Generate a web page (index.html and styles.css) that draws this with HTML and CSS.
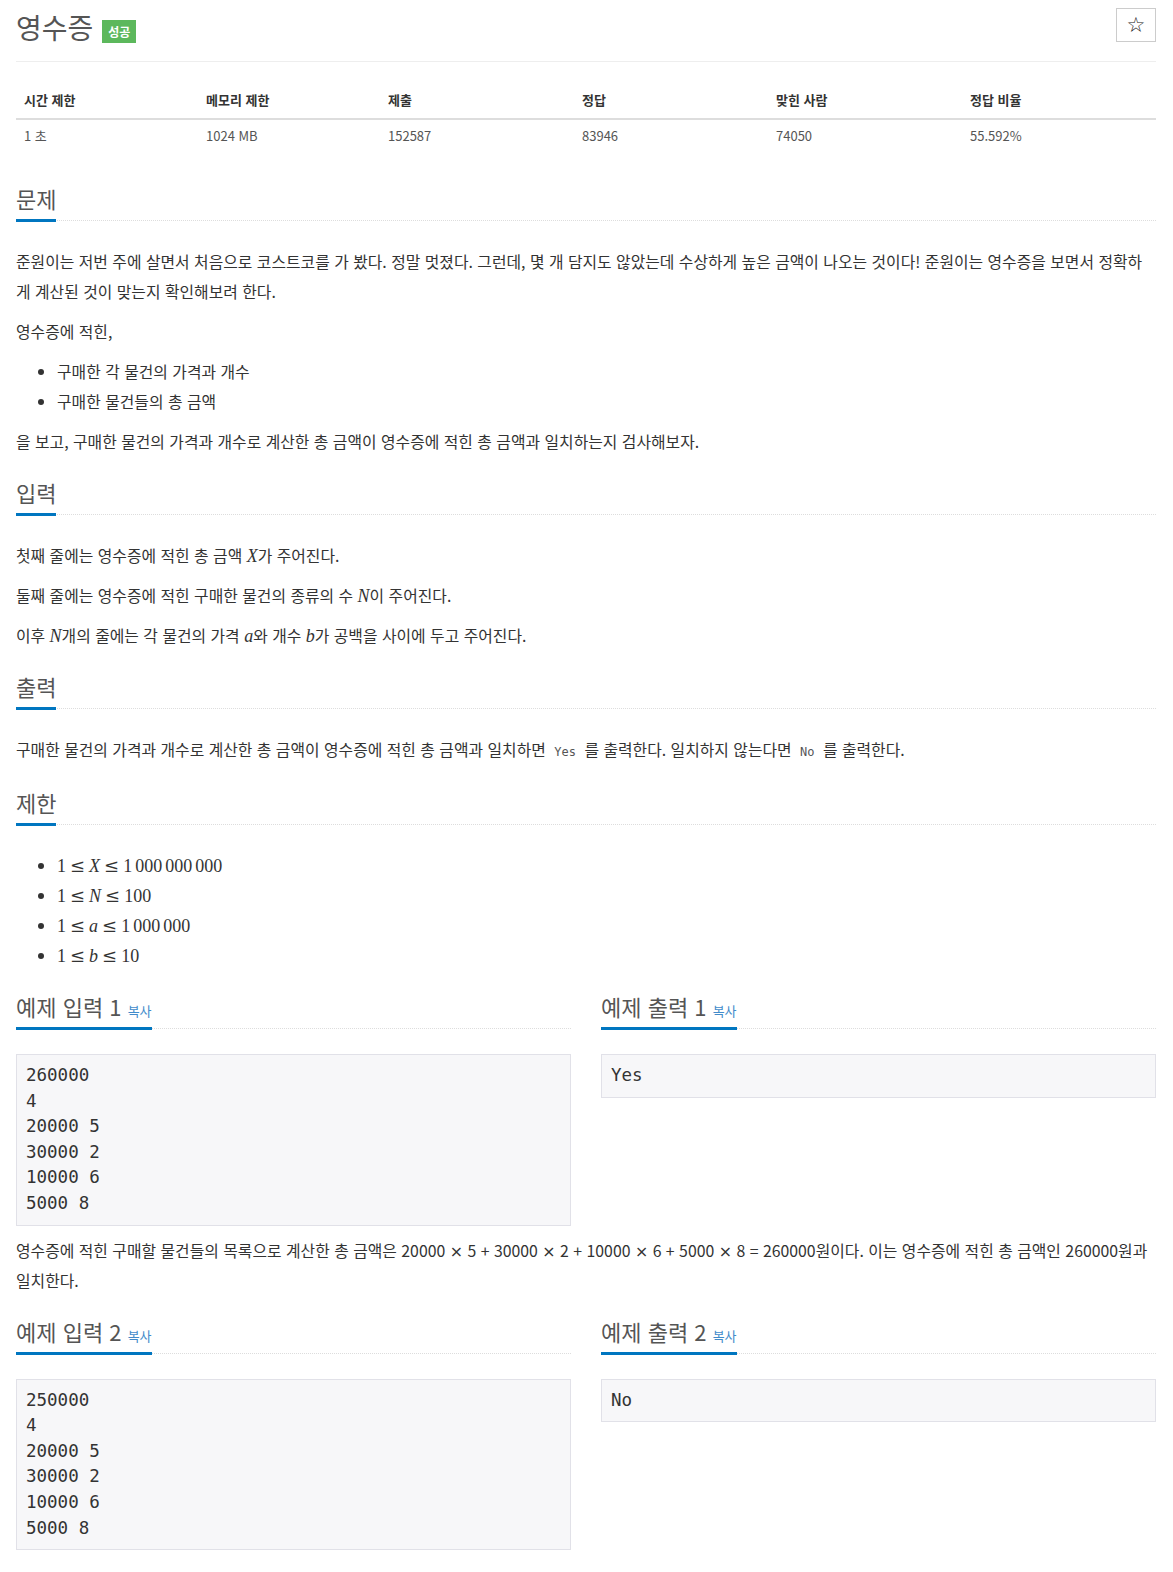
FILE: index.html
```html
<!DOCTYPE html>
<html lang="ko">
<head>
    <meta charset="UTF-8">
    <meta name="viewport" content="width=device-width, initial-scale=1.0">
    <title>영수증</title>
    <link rel="stylesheet" href="styles.css">
</head>
<body>
    <div class="container">
        <div class="page-header">
            <div class="title-row">
                <h1 class="problem-title">영수증</h1>
                <span class="label-success">성공</span>
            </div>
            <button class="star-btn" type="button">&#9734;</button>
        </div>

        <table class="problem-info">
            <colgroup>
                <col class="col-narrow">
                <col class="col-narrow">
                <col>
                <col>
                <col>
                <col>
            </colgroup>
            <thead>
                <tr>
                    <th>시간 제한</th>
                    <th>메모리 제한</th>
                    <th>제출</th>
                    <th>정답</th>
                    <th>맞힌 사람</th>
                    <th>정답 비율</th>
                </tr>
            </thead>
            <tbody>
                <tr>
                    <td>1 초</td>
                    <td>1024 MB</td>
                    <td>152587</td>
                    <td>83946</td>
                    <td>74050</td>
                    <td>55.592%</td>
                </tr>
            </tbody>
        </table>

        <section class="problem-section">
            <div class="headline"><h2>문제</h2></div>
            <p>준원이는 저번 주에 살면서 처음으로 코스트코를 가 봤다. 정말 멋졌다. 그런데, 몇 개 담지도 않았는데 수상하게 높은 금액이 나오는 것이다! 준원이는 영수증을 보면서 정확하게 계산된 것이 맞는지 확인해보려 한다.</p>
            <p>영수증에 적힌,</p>
            <ul>
                <li>구매한 각 물건의 가격과 개수</li>
                <li>구매한 물건들의 총 금액</li>
            </ul>
            <p>을 보고, 구매한 물건의 가격과 개수로 계산한 총 금액이 영수증에 적힌 총 금액과 일치하는지 검사해보자.</p>
        </section>

        <section class="problem-section">
            <div class="headline"><h2>입력</h2></div>
            <p>첫째 줄에는 영수증에 적힌 총 금액 <span class="math"><i>X</i></span>가 주어진다.</p>
            <p>둘째 줄에는 영수증에 적힌 구매한 물건의 종류의 수 <span class="math"><i>N</i></span>이 주어진다.</p>
            <p>이후 <span class="math"><i>N</i></span>개의 줄에는 각 물건의 가격 <span class="math"><i>a</i></span>와 개수 <span class="math"><i>b</i></span>가 공백을 사이에 두고 주어진다.</p>
        </section>

        <section class="problem-section section-output">
            <div class="headline"><h2>출력</h2></div>
            <p>구매한 물건의 가격과 개수로 계산한 총 금액이 영수증에 적힌 총 금액과 일치하면 <code>Yes</code> 를 출력한다. 일치하지 않는다면 <code>No</code> 를 출력한다.</p>
        </section>

        <section class="problem-section">
            <div class="headline"><h2>제한</h2></div>
            <ul class="math-list">
                <li><span class="math">1<span class="rel">&le;</span><i>X</i><span class="rel">&le;</span>1<span class="thin"></span>000<span class="thin"></span>000<span class="thin"></span>000</span></li>
                <li><span class="math">1<span class="rel">&le;</span><i>N</i><span class="rel">&le;</span>100</span></li>
                <li><span class="math">1<span class="rel">&le;</span><i>a</i><span class="rel">&le;</span>1<span class="thin"></span>000<span class="thin"></span>000</span></li>
                <li><span class="math">1<span class="rel">&le;</span><i>b</i><span class="rel">&le;</span>10</span></li>
            </ul>
        </section>

        <div class="sample-row">
            <div class="sample-col">
                <div class="headline"><h2>예제 입력 1 <a class="copy" href="#">복사</a></h2></div>
                <pre class="sampledata">260000
4
20000 5
30000 2
10000 6
5000 8</pre>
            </div>
            <div class="sample-col">
                <div class="headline"><h2>예제 출력 1 <a class="copy" href="#">복사</a></h2></div>
                <pre class="sampledata">Yes</pre>
            </div>
        </div>

        <section class="problem-section">
            <p>영수증에 적힌 구매할 물건들의 목록으로 계산한 총 금액은 20000 <span class="op">×</span> 5 + 30000 <span class="op">×</span> 2 + 10000 <span class="op">×</span> 6 + 5000 <span class="op">×</span> 8 = 260000원이다. 이는 영수증에 적힌 총 금액인 260000원과 일치한다.</p>
        </section>

        <div class="sample-row">
            <div class="sample-col">
                <div class="headline"><h2>예제 입력 2 <a class="copy" href="#">복사</a></h2></div>
                <pre class="sampledata">250000
4
20000 5
30000 2
10000 6
5000 8</pre>
            </div>
            <div class="sample-col">
                <div class="headline"><h2>예제 출력 2 <a class="copy" href="#">복사</a></h2></div>
                <pre class="sampledata">No</pre>
            </div>
        </div>
    </div>
</body>
</html>
```

FILE: styles.css
```css
body {
    margin: 0;
    font-family: "Noto Sans CJK KR", "Noto Sans", sans-serif;
    font-size: 15.85px;
    color: #333;
    background: #fff;
}
.container { padding: 8px 17px 0 16px; }

/* header */
.page-header {
    display: flex;
    justify-content: space-between;
    align-items: flex-start;
    padding-bottom: 16px;
    border-bottom: 1px solid #eee;
}
.title-row { display: flex; align-items: center; gap: 9px; margin-top: 1px; }
.problem-title { margin: 0; font-size: 28px; line-height: 36px; font-weight: normal; color: #555; }
.label-success {
    margin-top: 9px;
    background: #5cb85c; color: #fff;
    font-size: 12px; font-weight: bold; line-height: 15px;
    padding: 4px 6px;
}
.star-btn {
    width: 40px; height: 34px;
    background: #fff; border: 1px solid #ccc;
    font-size: 21px; line-height: 1; color: #222;
    font-family: "DejaVu Sans", sans-serif;
    padding: 0;
}

/* info table */
.problem-info { width: 100%; border-collapse: collapse; table-layout: fixed; margin: 20px 0 33px; font-size: 13px; }
.col-narrow { width: 182px; }
.problem-info th { text-align: left; font-weight: bold; color: #333; padding: 8px; line-height: 20px; border-bottom: 2px solid #ddd; }
.problem-info td { text-align: left; color: #555; padding: 6px 8px 5px; line-height: 20px; }

/* sections */
.problem-section { margin-bottom: 21px; }
.section-output { margin-bottom: 23px; }
.headline { border-bottom: 1px dotted #ddd; margin-bottom: 26px; }
.headline h2 {
    display: inline-block;
    margin: 0 0 -2px;
    font-size: 22px; line-height: 28px; font-weight: normal; color: #555;
    padding-bottom: 7px;
    border-bottom: 3px solid #0076c0;
}
.copy { font-size: 13px; line-height: 1; color: #428bca; text-decoration: none; }

p { margin: 0 0 10px; line-height: 30px; }
ul { margin: 0 0 10px; padding-left: 41px; }
li { line-height: 30px; }

.math { font-family: "Liberation Serif", serif; font-size: 18px; line-height: 1; }
.math i { font-style: italic; }
.rel { font-family: "DejaVu Serif", serif; margin: 0 4px; }
.thin { display: inline-block; width: 3px; }
.op { font-family: "DejaVu Sans", sans-serif; line-height: 1; }
code { font-family: "DejaVu Sans Mono", monospace; font-size: 12px; line-height: 1; color: #555; padding: 2px 4px; }

/* samples */
.sample-row { display: grid; grid-template-columns: 1fr 1fr; column-gap: 30px; }
.sample-row .headline { margin-bottom: 25px; }
.sampledata {
    margin: 0 0 10px;
    padding: 8px 9px;
    background: #f7f7f9;
    border: 1px solid #e1e1e8;
    font-family: "DejaVu Sans Mono", monospace;
    font-size: 17.5px;
    line-height: 25.6px;
    color: #333;
}
```
